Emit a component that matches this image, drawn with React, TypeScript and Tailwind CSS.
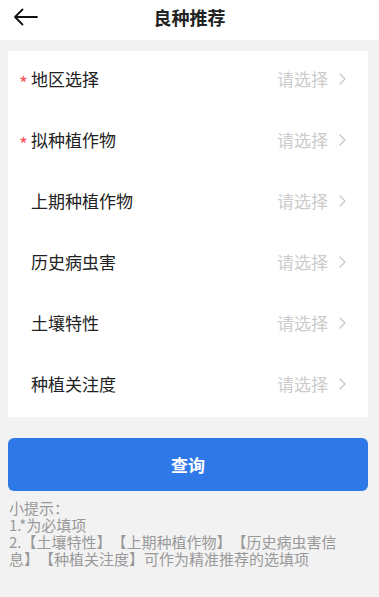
import React from "react";

const rows = [
  { label: "地区选择", required: true },
  { label: "拟种植作物", required: true },
  { label: "上期种植作物", required: false },
  { label: "历史病虫害", required: false },
  { label: "土壤特性", required: false },
  { label: "种植关注度", required: false },
];

export default function App() {
  return (
    <div
      className="w-[379px] h-[597px] bg-[#f2f2f2] overflow-hidden [text-spacing-trim:space-all]"
      style={{ fontFamily: '"Noto Sans CJK SC", "Noto Sans", sans-serif' }}
    >
      {/* Header */}
      <div className="relative h-[40px] bg-white flex items-center justify-center">
        <button className="absolute left-[12px] top-[6px] w-[26px] h-[22px] flex items-center justify-center">
          <svg width="25" height="18" viewBox="0 0 25 18" fill="none">
            <path d="M24 9H2M9.5 1.5L2 9l7.5 7.5" stroke="#111" strokeWidth="1.8" strokeLinecap="round" strokeLinejoin="round" />
          </svg>
        </button>
        <h1 className="text-[18px] font-bold text-[#222] -mt-[6px]">良种推荐</h1>
      </div>

      {/* Form card */}
      <div className="ml-[8px] mr-[11px] mt-[11px] bg-white">
        {rows.map((row) => (
          <div key={row.label} className="h-[61px] flex items-center pb-[6px] pl-[11px] pr-[22px]">
            <span className="w-[12px] text-[#f55555] text-[19px] leading-none pt-[8px]">
              {row.required ? "*" : ""}
            </span>
            <span className="flex-1 text-[17px] text-[#222]">{row.label}</span>
            <span className="text-[17px] text-[#cccccc]">请选择</span>
            <svg className="ml-[11px]" width="7" height="12" viewBox="0 0 7 12" fill="none">
              <path d="M1 1l5 5-5 5" stroke="#c8c8c8" strokeWidth="1.4" strokeLinecap="round" strokeLinejoin="round" />
            </svg>
          </div>
        ))}
      </div>

      {/* Query button */}
      <div className="ml-[8px] mr-[11px] mt-[21px]">
        <button className="w-full h-[53px] rounded-[6px] bg-[#2f78e8] text-white text-[17px] font-bold">
          查询
        </button>
      </div>

      {/* Tips */}
      <div className="pl-[9px] pr-[20px] mt-[8px] text-[15px] leading-[17px] text-[#999999]">
        <p>小提示：</p>
        <p>1.*为必填项</p>
        <p>2.【土壤特性】【上期种植作物】【历史病虫害信息】【种植关注度】可作为精准推荐的选填项</p>
      </div>
    </div>
  );
}
